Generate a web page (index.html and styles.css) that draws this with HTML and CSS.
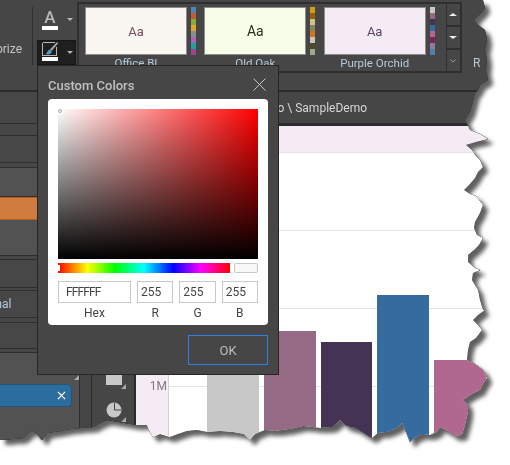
FILE: index.html
```html
<!DOCTYPE html>
<html lang="en">
<head>
<meta charset="utf-8">
<title>Custom Colors</title>
<link rel="stylesheet" href="styles.css">
</head>
<body>
<div class="torn">
<div class="app">
  <header class="ribbon">
    <div class="group-colorize"><span>Colorize</span></div>
    <div class="tools">
      <div class="tool">
        <div class="tool-icon"><span class="letter-a">A</span><i class="colorbar"></i></div>
        <i class="caret"></i>
      </div>
      <div class="tool tool-active">
        <div class="tool-icon">
          <svg class="brush" viewBox="0 0 16 15" width="16" height="15">
            <path d="M1 .5h12M.5 1v13M1 13.500h14M14.500 5v8" fill="none" stroke="#b8b8b8" stroke-width="1"/>
            <path d="M15 0l1 1.500L9.500 9 8 7.500z" fill="#a9a9a9"/>
            <path d="M3.500 12c1.500-.5 1.500-3 4-4.500l2.500 2.500c-1 2-3.500 3-6.500 2z" fill="#4f9bc9"/>
          </svg>
          <i class="colorbar"></i>
        </div>
        <i class="caret"></i>
      </div>
    </div>
    <section class="gallery">
      <div class="theme">
        <div class="theme-main">
          <div class="theme-card card-office"><span>Aa</span></div>
          <div class="theme-name">Office BI</div>
        </div>
        <div class="swatches">
          <i style="background:#4f86b8"></i><i style="background:#c4573a"></i><i style="background:#86ac35"></i><i style="background:#e0a62e"></i><i style="background:#8c8c8c"></i><i style="background:#a764bb"></i><i style="background:#1ea19c"></i><i style="background:#96488a"></i>
        </div>
      </div>
      <div class="theme">
        <div class="theme-main">
          <div class="theme-card card-oak"><span>Aa</span></div>
          <div class="theme-name">Old Oak</div>
        </div>
        <div class="swatches">
          <i style="background:#d69c10"></i><i style="background:#94600c"></i><i style="background:#cfc488"></i><i style="background:#8a8158"></i><i style="background:#ce7424"></i><i style="background:#c9c7b4"></i><i style="background:#4f4a22"></i><i style="background:#9dab85"></i>
        </div>
      </div>
      <div class="theme">
        <div class="theme-main">
          <div class="theme-card card-orchid"><span>Aa</span></div>
          <div class="theme-name">Purple Orchid</div>
        </div>
        <div class="swatches">
          <i style="background:#c8c8c8"></i><i style="background:#956a85"></i><i style="background:#453355"></i><i style="background:#356b9e"></i><i style="background:#b0688e"></i><i style="background:#7c2458"></i><i style="background:#8f7b9c"></i><i style="background:#4f7fa6"></i>
        </div>
      </div>
      <div class="scroller">
        <button class="scroll-btn"><i class="tri-up"></i></button>
        <button class="scroll-btn"><i class="tri-down"></i></button>
        <button class="scroll-btn"><svg viewBox="0 0 8 5" width="6" height="4"><path d="M.5.5L4 4 7.500.5" fill="none" stroke="#b5b5b5" stroke-width="1"/></svg></button>
      </div>
    </section>
    <div class="group-next">R</div>
  </header>

  <div class="workspace">
    <aside class="panel">
      <div class="row h32"></div>
      <div class="row h12"></div>
      <div class="row h27"></div>
      <div class="row h5"></div>
      <div class="row h29 lighter"></div>
      <div class="row-orange"></div>
      <div class="row h36 lighter"></div>
      <div class="row h4"></div>
      <div class="row h28"></div>
      <div class="row h3"></div>
      <div class="row h27"><span class="row-text">Normal</span></div>
      <div class="row h5"></div>
      <div class="row h26"></div>
      <div class="row h4"></div>
      <div class="panel-bottom">
        <i class="corner corner-panel"></i>
        <div class="pill">
          <svg viewBox="0 0 10 10" width="9" height="9"><path d="M1 1l8 8M9 1l-8 8" stroke="#fff" stroke-width="1.400"/></svg>
        </div>
      </div>
    </aside>
    <div class="gutter"></div>
    <nav class="rail">
      <div class="rail-icon">
        <svg viewBox="0 0 16 12" width="16" height="12"><path d="M0 0h16v12H0z" fill="#c8c8c8"/></svg>
        <i class="corner"></i>
      </div>
      <div class="rail-icon">
        <svg viewBox="0 0 16 16" width="16" height="16"><circle cx="8" cy="8" r="7.500" fill="#c8c8c8"/><path d="M8.500 1v7H15" fill="none" stroke="#444" stroke-width="1"/></svg>
        <i class="corner"></i>
      </div>
    </nav>
    <main class="content">
      <div class="pathbar"><span>Repo \ SampleDemo</span></div>
      <div class="band"></div>
      <div class="chart">
        <div class="axis"><span>1M</span></div>
        <div class="plot">
          <div class="bar" style="height:160px;background:#c8c8c8"></div>
          <div class="bar" style="height:134px;background:#956a85"></div>
          <div class="bar" style="height:123px;background:#453355"></div>
          <div class="bar" style="height:170px;background:#356b9e"></div>
          <div class="bar" style="height:105px;background:#b0688e"></div>
        </div>
      </div>
    </main>
  </div>

  <div class="dialog">
    <div class="dialog-head">
      <h1>Custom Colors</h1>
      <svg class="close" viewBox="0 0 13 13" width="13" height="13"><path d="M.5.5l12 12M12.500.5l-12 12" stroke="#c4c4c4" stroke-width="1"/></svg>
    </div>
    <div class="picker">
      <div class="field"><i class="field-marker"></i></div>
      <div class="slider-row">
        <div class="hue"><i class="hue-marker"></i></div>
        <div class="alpha"></div>
      </div>
      <div class="values">
        <div class="value value-hex"><div class="box box-hex">FFFFFF</div><label>Hex</label></div>
        <div class="value"><div class="box">255</div><label>R</label></div>
        <div class="value"><div class="box">255</div><label>G</label></div>
        <div class="value"><div class="box">255</div><label>B</label></div>
      </div>
    </div>
    <div class="dialog-foot"><button class="ok">OK</button></div>
  </div>
</div>
</div>
</body>
</html>
```

FILE: styles.css
```css
* { box-sizing: border-box; }
html, body { margin: 0; padding: 0; width: 510px; height: 465px; overflow: hidden; background: #fff; }
body { font-family: Roboto, "Open Sans", sans-serif; }
i { display: block; }

.torn {
  width: 510px;
  height: 465px;
  filter: drop-shadow(0 0 .5px #222) drop-shadow(5px 5px 2px #5f5f5f);
}
.app {
  position: relative;
  width: 510px;
  height: 465px;
  display: flex;
  flex-direction: column;
  background: #464646;
  clip-path: polygon(0 0, 483px 0, 485px 8px, 482px 12px, 474px 20px, 478px 25px, 485px 30px, 487px 40px, 485px 50px, 487px 60px, 486px 70px, 488px 80px, 480px 85px, 478px 90px, 475px 93px, 472px 105px, 470px 112px, 465px 120px, 470px 130px, 480px 134px, 488px 139px, 476px 142px, 466px 145px, 472px 150px, 475px 155px, 480px 160px, 483px 167px, 478px 172px, 475px 178px, 470px 184px, 464px 190px, 470px 194px, 476px 196px, 483px 205px, 480px 213px, 475px 222px, 474px 228px, 477px 235px, 483px 238px, 479px 245px, 474px 250px, 468px 255px, 468px 262px, 475px 268px, 480px 270px, 473px 273px, 472px 280px, 478px 290px, 480px 300px, 483px 310px, 485px 310px, 478px 315px, 473px 320px, 477px 324px, 482px 330px, 476px 338px, 470px 342px, 468px 350px, 467px 360px, 475px 364px, 483px 370px, 487px 378px, 483px 384px, 480px 390px, 472px 394px, 463px 400px, 468px 405px, 468px 412px, 465px 425px, 462px 435px, 455px 436px, 448px 431px, 440px 427px, 437px 432px, 430px 435px, 422px 434px, 415px 437px, 410px 442px, 406px 432px, 402px 423px, 397px 428px, 387px 432px, 378px 433px, 372px 438px, 368px 436px, 362px 432px, 355px 428px, 350px 427px, 345px 425px, 340px 420px, 335px 425px, 332px 427px, 320px 428px, 312px 427px, 303px 426px, 290px 429px, 275px 431px, 265px 430px, 255px 434px, 250px 440px, 244px 434px, 233px 432px, 220px 431px, 207px 432px, 197px 430px, 187px 431px, 178px 434px, 170px 437px, 160px 434px, 153px 437px, 149px 430px, 147px 425px, 137px 425px, 125px 423px, 107px 420px, 100px 423px, 93px 427px, 80px 428px, 70px 429px, 60px 431px, 47px 433px, 42px 440px, 38px 435px, 32px 430px, 27px 434px, 23px 438px, 12px 439px, 0 440px);
}

/* ribbon */
.ribbon { flex: none; display: flex; height: 90px; padding-top: 2px; }
.group-colorize {
  width: 33px;
  height: 58px;
  margin-top: 5px;
  border-right: 1px solid #2e2e2e;
  overflow: hidden;
  display: flex;
  justify-content: flex-end;
  align-items: flex-end;
  padding: 0 10px 9px 0;
  font-size: 12px;
  line-height: 14px;
  color: #c4c4c4;
}
.tools { width: 44px; padding-left: 4px; display: flex; flex-direction: column; }
.tool { width: 39px; height: 25px; display: flex; align-items: center; padding-left: 5px; margin-top: 5px; }
.tool-active { margin-top: 8px; background: #1f1f1f; border: 1px solid #161616; padding-left: 4px; }
.tool-icon { position: relative; width: 16px; height: 22px; display: flex; flex-direction: column; align-items: center; }
.letter-a { font-size: 17px; line-height: 17px; font-weight: 500; color: #b9b9b9; }
.colorbar { flex: none; width: 16px; height: 4px; background: #fff; }
.brush { display: block; flex: none; }
.caret { margin-left: 9px; width: 0; height: 0; border-left: 3px solid transparent; border-right: 3px solid transparent; border-top: 3px solid #b5b5b5; }

.gallery {
  width: 385px;
  height: 71px;
  border: 2px solid #2f2f2f;
  display: flex;
  padding-left: 6px;
}
.theme { width: 120px; display: flex; gap: 4px; padding-top: 3px; }
.theme-main { width: 102px; }
.theme-card {
  height: 48px;
  border: 1px solid #8d8d8d;
  display: flex;
  align-items: center;
  justify-content: center;
  font-size: 13px;
}
.card-office { background: #faf6f1; color: #7b4a5c; }
.card-oak { background: #f6fde8; color: #2c2c1c; font-size: 14px; }
.card-orchid { background: #f5ebf4; color: #5b4468; }
.theme-name { margin-top: 1px; text-align: center; font-size: 11.500px; line-height: 14px; color: #b4cadb; }
.swatches { width: 5px; display: flex; flex-direction: column; }
.swatches i { width: 5px; height: 6px; }
.scroller {
  margin-left: 3px;
  width: 14px;
  border-left: 1px solid #2f2f2f;
  display: flex;
  flex-direction: column;
  flex: none;
}
.scroll-btn {
  flex: 1;
  padding: 0;
  width: 100%;
  background: #464646;
  border: 0;
  border-bottom: 2px solid #2f2f2f;
  display: flex;
  align-items: center;
  justify-content: center;
}
.scroll-btn:last-child { border-bottom: 0; }
.tri-up { width: 0; height: 0; border: 4px solid transparent; border-top: 0; border-bottom: 3px solid #eee; }
.tri-down { width: 0; height: 0; border: 4px solid transparent; border-bottom: 0; border-top: 3px solid #eee; }
.group-next { padding: 54px 0 0 11px; font-size: 12px; line-height: 14px; color: #b4cadb; }

/* body */
.workspace { flex: 1; min-height: 0; display: flex; border-top: 2px solid #2c2c2c; }
.panel { flex: none; width: 80px; border-right: 1px solid #2e2e2e; display: flex; flex-direction: column; background: #474747; }
.row { flex: none; border-bottom: 1px solid #2e2e2e; }
.h3 { height: 3px; } .h4 { height: 4px; } .h5 { height: 5px; } .h12 { height: 12px; }
.h26 { height: 26px; } .h27 { height: 27px; } .h28 { height: 28px; } .h29 { height: 29px; } .h32 { height: 32px; } .h36 { height: 36px; }
.lighter { background: #525252; }
.row-orange { flex: none; height: 23px; background: #cf7d3f; border-top: 1px solid #b5601f; border-bottom: 1px solid #b5601f; }
.row-text { display: block; margin-left: -28px; font-size: 12px; line-height: 27px; color: #b4cadb; }
.panel-bottom { flex: 1; position: relative; background: #525252; padding-top: 31px; }
.corner { position: absolute; width: 0; height: 0; border-left: 5px solid transparent; border-bottom: 5px solid #a8a8a8; }
.corner-panel { top: 22px; right: 0; }
.pill {
  width: 72px;
  height: 23px;
  background: #2a6d9e;
  border: 1px solid #205580;
  border-left: 0;
  border-radius: 0 5px 5px 0;
  display: flex;
  align-items: center;
  justify-content: flex-end;
  padding-right: 5px;
}
.gutter { flex: none; width: 12px; background: #464646; border-right: 1px solid #2a2a2a; }
.rail {
  flex: none;
  width: 44px;
  background: #464646;
  border-right: 2px solid #2a2a2a;
  display: flex;
  flex-direction: column;
  align-items: center;
  justify-content: flex-end;
  gap: 17px;
  padding: 0 0 47px 2px;
}
.rail-icon { position: relative; width: 16px; }
.rail-icon svg { display: block; }
.rail-icon .corner { right: -4px; bottom: -4px; }
.content { flex: 1; min-width: 0; display: flex; flex-direction: column; }
.pathbar {
  flex: none;
  height: 34px;
  border-bottom: 3px solid #2c2c2c;
  padding-left: 121px;
  display: flex;
  align-items: center;
  font-size: 12px;
  color: #d6d6d6;
}
.band { flex: none; height: 27px; background: #f5ebf4; border-bottom: 1px solid #e6dfe6; }
.chart { flex: 1; display: flex; min-height: 0; background: #fff; }
.axis {
  flex: none;
  width: 33px;
  background: #f5ebf4;
  border-right: 1px solid #d6d0d6;
  padding: 226px 1px 0 0;
  text-align: right;
  font-size: 12px;
  line-height: 15px;
  color: #84768a;
}
.plot {
  flex: 1;
  display: flex;
  align-items: flex-end;
  gap: 5px;
  padding-left: 38px;
  background: linear-gradient(to bottom, transparent 77px, #e4e4e4 77px) 0 0 / 100% 78px;
}
.bar { flex: none; width: 51.750px; }

/* dialog */
.dialog {
  position: absolute;
  left: 37px;
  top: 65px;
  width: 242px;
  height: 310px;
  background: #464646;
  border: 1px solid #262626;
  display: flex;
  flex-direction: column;
  padding: 0 10px;
}
.dialog-head { flex: none; height: 33px; display: flex; align-items: center; justify-content: space-between; padding-right: 2px; }
.dialog-head h1 { margin: 6px 0 0; font-size: 13px; line-height: 16px; font-weight: 500; color: #c2c2c2; }
.close { display: block; margin-top: 4px; }
.picker { flex: none; height: 226px; background: #fff; border-radius: 4px; padding: 10px; display: flex; flex-direction: column; }
.field {
  position: relative;
  flex: none;
  height: 150px;
  background: linear-gradient(to top, #000, rgba(0,0,0,0)), linear-gradient(to right, #fff, #f00);
}
.field-marker { position: absolute; left: 0; top: 0; width: 4px; height: 4px; border: 1px solid #aaa; border-radius: 50%; }
.slider-row { flex: none; display: flex; gap: 4px; margin-top: 4px; height: 10px; }
.hue {
  position: relative;
  width: 172px;
  background: linear-gradient(to right, #f00, #ff0 17%, #0f0 33%, #0ff 50%, #00f 67%, #f0f 83%, #f00);
}
.hue-marker { position: absolute; left: 0; top: 2px; width: 2px; height: 6px; background: #fff; }
.alpha { width: 24px; background: #f8f8f8; border: 1px solid #c8c8c8; border-radius: 2px; }
.values { flex: none; display: flex; gap: 6px; margin-top: 8px; }
.value { flex: 1; min-width: 0; display: flex; flex-direction: column; }
.value-hex { flex: none; width: 73px; }
.box { height: 22px; border: 1px solid #c8c8c8; padding-left: 3px; font-size: 12px; line-height: 20px; color: #444; }
.box-hex { padding-left: 7px; letter-spacing: -.9px; }
.value label { margin-top: 3px; text-align: center; font-size: 12px; line-height: 15px; color: #444; }
.dialog-foot { flex: 1; display: flex; justify-content: flex-end; padding-top: 10px; align-items: flex-start; }
.ok {
  width: 80px;
  height: 30px;
  background: #464646;
  border: 1px solid #2a7fe8;
  font-family: inherit;
  font-size: 13px;
  color: #bdbdbd;
  padding: 0;
}
```
